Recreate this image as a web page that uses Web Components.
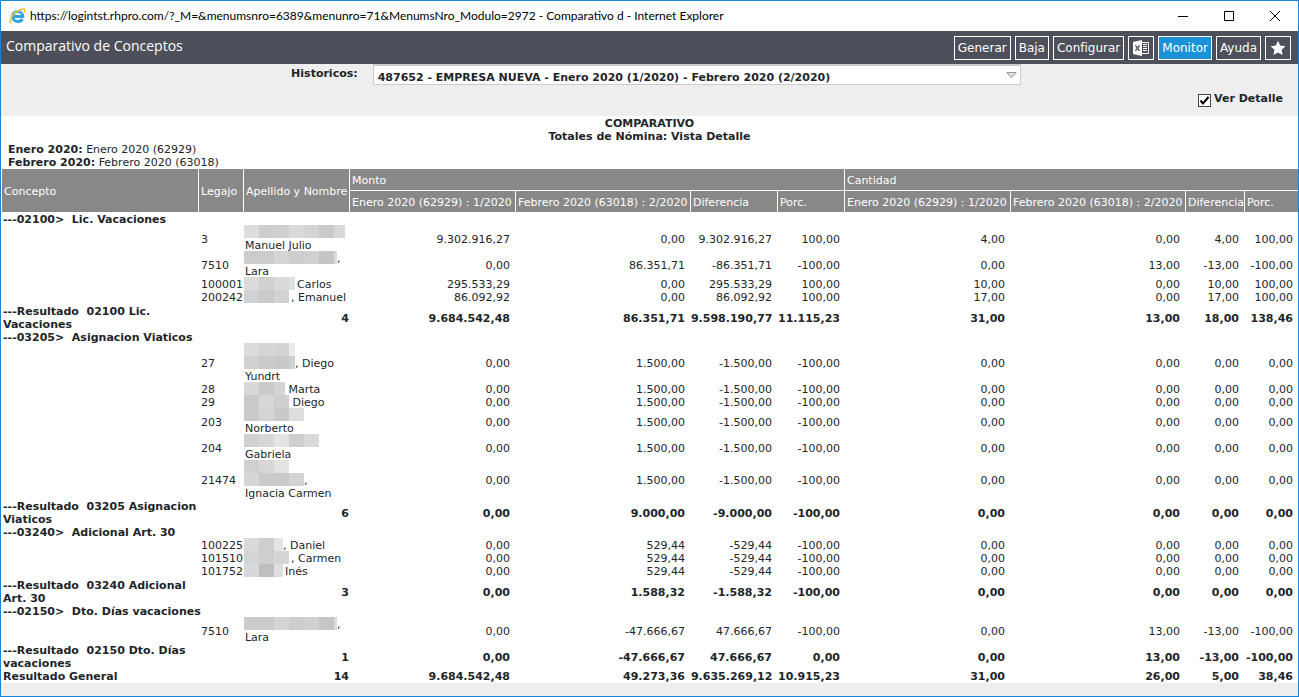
<!DOCTYPE html>
<html lang="es">
<head>
<meta charset="utf-8">
<title>Comparativo de Conceptos</title>
<style>
  * { box-sizing: border-box; }
  body { margin: 0; font: 11px/13px "DejaVu Sans", Verdana, sans-serif; color: #212529; }
</style>
</head>
<body>
<app-window>
  <title-bar>https://logintst.rhpro.com/?_M=&amp;menumsnro=6389&amp;menunro=71&amp;MenumsNro_Modulo=2972 - Comparativo d - Internet Explorer</title-bar>
  <tool-bar heading="Comparativo de Conceptos">
    <tool-button>Generar</tool-button>
    <tool-button>Baja</tool-button>
    <tool-button>Configurar</tool-button>
    <tool-button icon label="Exportar a Excel">
      <svg width="16" height="16" viewBox="0 0 16 16"><path fill="#fff" d="M0 2 9 0v16L0 14z"/><path stroke="#4d505b" stroke-width="1.4" d="M2.4 5.3 6.6 10.8M6.6 5.3 2.4 10.8"/><path fill="none" stroke="#fff" d="M9 2.500h6.500v11H9M10 4.500h4M10 6.500h4M10 8.500h4M10 10.500h4"/></svg>
    </tool-button>
    <tool-button active>Monitor</tool-button>
    <tool-button>Ayuda</tool-button>
    <tool-button icon label="Favoritos">
      <svg width="16" height="16" viewBox="0 0 16 16"><path fill="#fff" d="m8 .8 2.2 4.7 5.3.7-3.9 3.6 1 5.2L8 12.4 3.4 15l1-5.2L.5 6.2l5.3-.7z"/></svg>
    </tool-button>
  </tool-bar>
  <filter-bar></filter-bar>
  <compare-report></compare-report>
</app-window>

<script>
class Base extends HTMLElement {
  connectedCallback() {
    if (this.shadowRoot) return;
    this.attachShadow({ mode: 'open' }).innerHTML =
      `<style>*{box-sizing:border-box}${this.css()}</style>${this.html()}`;
  }
}

customElements.define('app-window', class extends Base {
  css() { return `:host{display:flex;flex-direction:column;box-sizing:border-box;min-height:100vh;border:1px solid #1883d7;background:#eee}`; }
  html() { return `<slot></slot>`; }
});

customElements.define('title-bar', class extends Base {
  css() { return `
    :host{display:flex;align-items:center;height:30px;padding:0 16px 0 8px;background:#fff;color:#000;font:12px/16px Lato,"Segoe UI",sans-serif}
    .t{flex:1;margin-left:4px;white-space:nowrap;overflow:hidden}
    .c{display:flex;gap:33px}
    button{display:flex;width:13px;height:13px;padding:0;border:0;background:none}`; }
  html() { return `
    <svg width="17" height="16" viewBox="0 0 17 16" aria-hidden="true">
      <path fill="none" stroke="#2fa3e6" stroke-width="3" d="M3.6 8.6h10.2C13.7 5.3 11.6 3.4 8.9 3.4 5.900 3.4 3.700 5.600 3.700 8.600c0 3 2.200 5 5.200 5 2.200 0 3.700-.9 4.500-2.600"/>
      <path fill="none" stroke="#8fd6fa" stroke-width="1" d="M4 6.800C4.700 4.600 6.500 3 9 3c2 0 3.600 1 4.400 2.600"/>
      <path fill="none" stroke="#f2bd2c" stroke-width="1.500" d="M2.500 14.800C-.6 14.200 1.700 8.500 6.600 4.400 10.500 1.200 15.200-.2 15.700 2c.2.800-.1 1.700-.6 2.600"/>
    </svg>
    <span class="t"><slot></slot></span>
    <span class="c">
      <button aria-label="Minimizar"><svg width="13" height="13"><path stroke="#000" d="M1 6.500h10"/></svg></button>
      <button aria-label="Maximizar"><svg width="13" height="13"><path fill="none" stroke="#000" d="M1.500 1.500h9v9h-9z"/></svg></button>
      <button aria-label="Cerrar"><svg width="13" height="13"><path stroke="#000" d="M1 1l10 10M11 1 1 11"/></svg></button>
    </span>`; }
});

customElements.define('tool-bar', class extends Base {
  css() { return `
    :host{display:flex;align-items:center;gap:4px;height:33px;padding:0 7px 0 5px;background:#4d505b;color:#fff}
    h1{flex:1;margin:0;padding-bottom:3px;font:14px/20px "Open Sans","Segoe UI",sans-serif}`; }
  html() { return `<h1>${this.getAttribute('heading')}</h1><slot></slot>`; }
});

customElements.define('tool-button', class extends Base {
  css() { return `
    :host{display:block}
    button{display:flex;align-items:center;justify-content:center;height:24px;padding:0 3px;border:1px solid #fff;background:transparent;color:#fff;font:12px/16px "DejaVu Sans",Verdana,sans-serif;white-space:nowrap}
    :host([icon]) button{width:26px;padding:0}
    :host([active]) button{background:#1a92d9}`; }
  html() {
    const label = this.getAttribute('label');
    return `<button type="button"${label ? ` aria-label="${label}"` : ''}><slot></slot></button>`;
  }
});

customElements.define('filter-bar', class extends Base {
  css() { return `
    :host{display:block;height:52px;background:#eee;font-weight:bold}
    .row{display:grid;grid-template-columns:27.5% 50%;column-gap:15px}
    .row label{text-align:right;padding-top:3px}
    .box{position:relative}
    select{display:block;appearance:none;width:100%;height:21px;padding:4px 16px 0 4px;border:1px solid #ccc;border-top-width:2px;border-radius:0;background:#fff;color:#212529;font:bold 11px/13px "DejaVu Sans",Verdana,sans-serif}
    .box svg{position:absolute;right:4px;top:8px;pointer-events:none}
    .check{display:flex;justify-content:flex-end;gap:3px;padding:7px 15px 0 0}
    input{display:block;appearance:none;width:13px;height:13px;margin:2px 0 0;border:1px solid #444;background:#fff}
    .tick{position:relative}
    .tick svg{position:absolute;left:0;top:2px;display:none;pointer-events:none}
    input:checked+svg{display:block}`; }
  html() { return `
    <div class="row">
      <label for="h">Historicos:</label>
      <div class="box">
        <select id="h"><option>487652 - EMPRESA NUEVA - Enero 2020 (1/2020) - Febrero 2020 (2/2020)</option></select>
        <svg width="11" height="7" viewBox="0 0 11 7"><path fill="#e0e0e0" stroke="#999" d="M.8.500h9.400L5.500 5.800z"/></svg>
      </div>
    </div>
    <div class="check">
      <span class="tick"><input type="checkbox" id="v" checked><svg width="13" height="13"><path fill="none" stroke="#000" stroke-width="2" d="M2.500 6.500 5 9.500 10.500 3"/></svg></span>
      <label for="v">Ver Detalle</label>
    </div>`; }
});

/* Pixelated block that hides a surname: tones is a list of greys, one per 15px tile. */
customElements.define('masked-name', class extends Base {
  css() {
    const tones = this.getAttribute('tones').split(' ');
    const stops = tones.map((c, i) => `#${c} ${i * 15}px ${(i + 1) * 15}px`).join(',');
    return `:host{display:inline-block;vertical-align:top;width:${this.getAttribute('size')}px;height:13px;margin:-1px 0 0 -1px;background:linear-gradient(90deg,${stops})}`;
  }
  html() { return ''; }
});

const mask = (size, tones) => `<masked-name size="${size}" tones="${tones}"></masked-name>`;
const long = 'cbccce cbccce d5d5d5 cccdcf cfd0d2 c4c5c7 dadada';
const zero = '0,00';
const down = v => [zero, v, '-' + v, '-100,00', zero, zero, zero, zero];
const groups = [
  { head: '---02100>&nbsp; Lic. Vacaciones', sum: '---Resultado&nbsp; 02100 Lic. Vacaciones', count: 4, gap: true,
    total: ['9.684.542,48', '86.351,71', '9.598.190,77', '11.115,23', '31,00', '13,00', '18,00', '138,46'],
    rows: [
      ['3', mask(101, 'dcdddd cccecd cecfd0 d8d9da d3d4d4 c8c9cb d8d8d8') + '<br>Manuel Julio', ['9.302.916,27', zero, '9.302.916,27', '100,00', '4,00', zero, '4,00', '100,00']],
      ['7510', mask(93, long) + ',<br>Lara', [zero, '86.351,71', '-86.351,71', '-100,00', zero, '13,00', '-13,00', '-100,00']],
      ['100001', mask(51, 'dbdbdb cfd1d0 d8d9da dfe1e0') + '<i></i>Carlos', ['295.533,29', zero, '295.533,29', '100,00', '10,00', zero, '10,00', '100,00']],
      ['200242', mask(45, 'd0d1d3 c9cacc d1d2d4') + '<i></i>, Emanuel', ['86.092,92', zero, '86.092,92', '100,00', '17,00', zero, '17,00', '100,00']]
    ] },
  { head: '---03205>&nbsp; Asignacion Viaticos', sum: '---Resultado&nbsp; 03205 Asignacion Viaticos', count: 6,
    total: [zero, '9.000,00', '-9.000,00', '-100,00', zero, zero, zero, zero],
    rows: [
      ['27', mask(51, 'dcdcdc d4d5d7 d3d3d3 ebebeb') + '<br>' + mask(51, 'd0d1d3 cacbcd c7c8ca cfcfcf') + ', Diego<br>Yundrt', down('1.500,00')],
      ['28', mask(41, 'd8d8d8 c9cacc d4d4d4') + ' Marta', down('1.500,00')],
      ['29', mask(45, 'c9cacc d7d7d7 cfcfcf') + ' Diego', down('1.500,00')],
      ['203', mask(60, 'c9cacc d4d6d5 c8c9cb dddddd') + '<br>Norberto', down('1.500,00')],
      ['204', mask(75, 'd0d0d0 d7d7d8 e3e5e4 cdced0 d8dad9') + '<br>Gabriela', down('1.500,00')],
      ['21474', mask(45, 'd0d0d0 d7d7d7 e3e3e3') + '<br>' + mask(60, 'd5d6d6 c9cacb c8c9cb d3d3d3') + ',<br>Ignacia Carmen', down('1.500,00')]
    ] },
  { head: '---03240>&nbsp; Adicional Art. 30', sum: '---Resultado&nbsp; 03240 Adicional Art. 30', count: 3, gap: true,
    total: [zero, '1.588,32', '-1.588,32', '-100,00', zero, zero, zero, zero],
    rows: [
      ['100225', mask(39, 'd9d9d9 cecece e4e6e5') + ', Daniel', down('529,44')],
      ['101510', mask(45, 'd3d4d6 cdcfce d5d5d5') + '<i></i>, Carmen', down('529,44')],
      ['101752', mask(39, 'd7d8da bebfc1 dedede') + '<i></i>Inés', down('529,44')]
    ] },
  { head: '---02150>&nbsp; Dto. Días vacaciones', sum: '---Resultado&nbsp; 02150 Dto. Días vacaciones', count: 1,
    total: [zero, '-47.666,67', '47.666,67', zero, zero, '13,00', '-13,00', '-100,00'],
    rows: [['7510', mask(93, long) + ',<br>Lara', [zero, '-47.666,67', '47.666,67', '-100,00', zero, '13,00', '-13,00', '-100,00']]] }
];

customElements.define('compare-report', class extends Base {
  css() { return `
    :host{display:block;padding-top:1px;background:#fff}
    h2{margin:0;font-size:11px;line-height:13px;text-align:center}
    dl{margin:0;padding-left:7px}
    dt,dd{display:inline;margin:0}
    dt{font-weight:bold}
    .wrap{padding-left:1px}
    table{width:100%;table-layout:fixed;border-collapse:separate;border-spacing:0}
    td,th{padding:0 6px 0 0;text-align:right;font-weight:inherit;vertical-align:middle}
    td.p{padding-right:5px}
    thead th{height:21px;padding:1px 2px 0;background:#888;color:#fff;text-align:left;white-space:nowrap;border-right:1px solid #fff}
    thead th.end{border-right:0}
    thead th.top{height:22px;border-bottom:1px solid #fff}
    tbody th{padding:0 0 0 1px;text-align:left}
    td.id,td.name{padding:0 0 0 1px;text-align:left;white-space:nowrap}
    td.id{padding-left:2px}
    td.count{padding-right:1px}
    tr.b{font-weight:bold}
    tr.head th{white-space:nowrap}
    tr.gap th,tr.gap td,tbody tr:first-child th{padding-top:1px}
    i{display:inline-block;width:2px}`; }
  html() {
    const nums = v => v.map((n, i) => `<td${i % 4 === 3 ? ' class="p"' : ''}>${n}</td>`).join('');
    const total = (t, c, v, gap) => `<tr class="b${gap ? ' gap' : ''}"><th scope="row">${t}</th><td class="count" colspan="2">${c}</td>${nums(v)}</tr>`;
    const cols = ['', 45, 106, 166, 175, 87, 67, 166, 175, 59, 53];
    const periods = '<th scope="col">Enero 2020 (62929) : 1/2020</th><th scope="col">Febrero 2020 (63018) : 2/2020</th><th scope="col">Diferencia</th>';
    return `
    <h2>COMPARATIVO<br>Totales de Nómina: Vista Detalle</h2>
    <dl><div><dt>Enero 2020:</dt> <dd>Enero 2020 (62929)</dd></div><div><dt>Febrero 2020:</dt> <dd>Febrero 2020 (63018)</dd></div></dl>
    <div class="wrap"><table>
      <colgroup>${cols.map(w => w ? `<col style="width:${w}px">` : '<col>').join('')}</colgroup>
      <thead>
        <tr><th rowspan="2" scope="col">Concepto</th><th rowspan="2" scope="col">Legajo</th><th rowspan="2" scope="col">Apellido y Nombre</th><th class="top" colspan="4" scope="colgroup">Monto</th><th class="top end" colspan="4" scope="colgroup">Cantidad</th></tr>
        <tr>${periods}<th scope="col">Porc.</th>${periods}<th class="end" scope="col">Porc.</th></tr>
      </thead>
      <tbody>${groups.map(g => `
        <tr class="b head"><th colspan="11" scope="rowgroup">${g.head}</th></tr>
        ${g.rows.map(([id, name, v]) => `<tr><td></td><td class="id">${id}</td><td class="name">${name}</td>${nums(v)}</tr>`).join('')}
        ${total(g.sum, g.count, g.total, g.gap)}`).join('')}
        ${total('Resultado General', 14, ['9.684.542,48', '49.273,36', '9.635.269,12', '10.915,23', '31,00', '26,00', '5,00', '38,46'], false)}
      </tbody>
    </table></div>`;
  }
});
</script>
</body>
</html>
